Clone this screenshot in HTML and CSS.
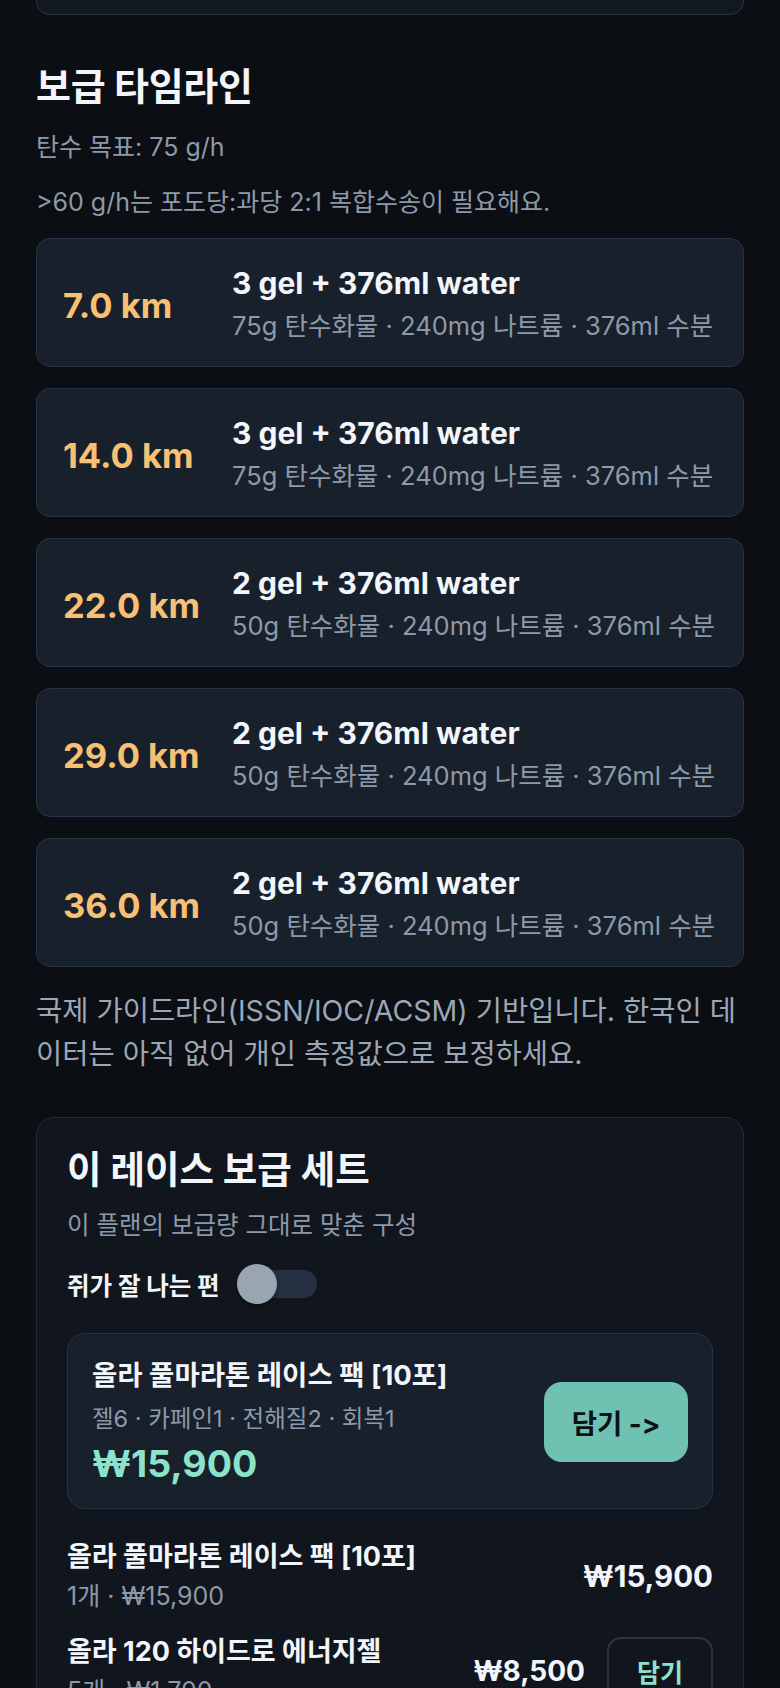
FILE: index.html
```html
<!DOCTYPE html>
<html lang="ko">
<head>
	<meta charset="UTF-8">
	<title>보급 타임라인</title>
	<link rel="stylesheet" href="styles.css">
</head>
<body>
	<div class="page">
		<div class="prev-card"></div>

		<h2 class="sec-title">보급 타임라인</h2>
		<p class="meta first">탄수 목표: 75 g/h</p>
		<p class="meta">&gt;60 g/h는 포도당:과당 2:1 복합수송이 필요해요.</p>

		<ul class="stops">
			<li class="stop">
				<div class="km">7.0 km</div>
				<div>
					<div class="stop-title">3 gel + 376ml water</div>
					<div class="stop-sub">75g 탄수화물 · 240mg 나트륨 · 376ml 수분</div>
				</div>
			</li>
			<li class="stop">
				<div class="km">14.0 km</div>
				<div>
					<div class="stop-title">3 gel + 376ml water</div>
					<div class="stop-sub">75g 탄수화물 · 240mg 나트륨 · 376ml 수분</div>
				</div>
			</li>
			<li class="stop">
				<div class="km">22.0 km</div>
				<div>
					<div class="stop-title">2 gel + 376ml water</div>
					<div class="stop-sub">50g 탄수화물 · 240mg 나트륨 · 376ml 수분</div>
				</div>
			</li>
			<li class="stop">
				<div class="km">29.0 km</div>
				<div>
					<div class="stop-title">2 gel + 376ml water</div>
					<div class="stop-sub">50g 탄수화물 · 240mg 나트륨 · 376ml 수분</div>
				</div>
			</li>
			<li class="stop">
				<div class="km">36.0 km</div>
				<div>
					<div class="stop-title">2 gel + 376ml water</div>
					<div class="stop-sub">50g 탄수화물 · 240mg 나트륨 · 376ml 수분</div>
				</div>
			</li>
		</ul>

		<p class="note">국제 가이드라인(ISSN/IOC/ACSM) 기반입니다. 한국인 데이터는 아직 없어 개인 측정값으로 보정하세요.</p>

		<section class="kit">
			<h2 class="kit-title">이 레이스 보급 세트</h2>
			<p class="kit-sub">이 플랜의 보급량 그대로 맞춘 구성</p>
			<div class="cramp">
				<span>쥐가 잘 나는 편</span>
				<span class="switch"><span class="knob"></span></span>
			</div>

			<div class="pack">
				<div class="pack-info">
					<div class="pack-name">올라 풀마라톤 레이스 팩 [10포]</div>
					<div class="pack-desc">젤6 · 카페인1 · 전해질2 · 회복1</div>
					<div class="pack-price">₩15,900</div>
				</div>
				<button class="btn-add">담기 -&gt;</button>
			</div>

			<ul class="items">
				<li class="item">
					<div class="item-info">
						<div class="item-name">올라 풀마라톤 레이스 팩 [10포]</div>
						<div class="item-sub">1개 · ₩15,900</div>
					</div>
					<div class="item-price">₩15,900</div>
				</li>
				<li class="item">
					<div class="item-info">
						<div class="item-name">올라 120 하이드로 에너지젤</div>
						<div class="item-sub">5개 · ₩1,700</div>
					</div>
					<div class="item-price small">₩8,500</div>
					<button class="btn-line">담기</button>
				</li>
			</ul>
		</section>
	</div>
</body>
</html>
```

FILE: styles.css
```css
* {
	box-sizing: border-box;
}
html, body {
	margin: 0;
	padding: 0;
	background: #0b0e13;
}
body {
	font-family: Inter, "Noto Sans CJK KR", sans-serif;
	color: #f2f5f9;
}
ul {
	list-style: none;
	margin: 0;
	padding: 0;
}
p, h2 {
	margin: 0;
}
button {
	font-family: inherit;
	cursor: pointer;
}
.page {
	padding: 0 36px 40px 36px;
}

/* 위쪽 카드 끝부분 */
.prev-card {
	height: 15px;
	background: #121820;
	border: 1px solid #283242;
	border-top: 0;
	border-radius: 0 0 14px 14px;
}

.sec-title {
	margin-top: 49px;
	font-size: 38px;
	line-height: 44px;
	font-weight: 700;
	letter-spacing: -0.3px;
}
.meta {
	margin-top: 21.5px;
	font-size: 25px;
	line-height: 34px;
	color: #8d99a9;
}
.meta.first {
	margin-top: 21.5px;
}

/* 타임라인 */
.stops {
	margin-top: 19px;
	display: flex;
	flex-direction: column;
	gap: 21px;
}
.stop {
	display: grid;
	grid-template-columns: 141px 1fr;
	column-gap: 28px;
	align-items: center;
	padding: 23px 26px 20px 26px;
	background: #18202b;
	border: 1px solid #283345;
	border-radius: 14px;
}
.km {
	margin-top: 4px;
	font-size: 34.5px;
	line-height: 44px;
	font-weight: 700;
	color: #f7c074;
}
.stop-title {
	font-size: 30px;
	line-height: 43px;
	font-weight: 700;
	color: #f2f5f9;
}
.stop-sub {
	margin-top: 1px;
	font-size: 25.5px;
	line-height: 40px;
	color: #8d99a9;
}

.note {
	margin-top: 22px;
	font-size: 28.5px;
	line-height: 43px;
	color: #9ca7b5;
}

/* 보급 세트 */
.kit {
	margin-top: 42px;
	padding: 30px 30px 40px 30px;
	background: #11161e;
	border: 1px solid #232c3a;
	border-radius: 18px;
}
.kit-title {
	font-size: 37.5px;
	line-height: 44px;
	font-weight: 700;
}
.kit-sub {
	margin-top: 16px;
	font-size: 24.5px;
	line-height: 34px;
	color: #8d99a9;
}
.cramp {
	margin-top: 22px;
	height: 40px;
	display: flex;
	align-items: center;
	gap: 17px;
	font-size: 24.5px;
	font-weight: 700;
}
.switch {
	position: relative;
	width: 80px;
	height: 28px;
	border-radius: 14px;
	background: #253042;
}
.knob {
	position: absolute;
	left: 0;
	top: -6px;
	width: 40px;
	height: 40px;
	border-radius: 50%;
	background: #9aa5b2;
	box-shadow: 0 2px 4px rgba(0, 0, 0, 0.4);
}

.pack {
	margin-top: 29px;
	display: flex;
	align-items: center;
	justify-content: space-between;
	padding: 24px 24px 22px 24px;
	background: #18202b;
	border: 1px solid #283345;
	border-radius: 18px;
}
.pack-name {
	font-size: 27.5px;
	line-height: 34px;
	font-weight: 700;
}
.pack-desc {
	margin-top: 11px;
	font-size: 23.5px;
	line-height: 32px;
	color: #8d99a9;
}
.pack-price {
	margin-top: 7px;
	font-size: 37.5px;
	line-height: 44px;
	font-weight: 700;
	color: #8de2cc;
}
.btn-add {
	width: 144px;
	height: 80px;
	border: 0;
	border-radius: 18px;
	background: #6fc2b2;
	color: #0c1116;
	font-size: 27.5px;
	font-weight: 700;
}

.items {
	margin-top: 30px;
	display: flex;
	flex-direction: column;
	gap: 22px;
}
.item {
	display: flex;
	align-items: center;
	gap: 22px;
}
.item-info {
	flex: 1;
}
.item-name {
	font-size: 27px;
	line-height: 36px;
	font-weight: 700;
}
.item-sub {
	margin-top: 5px;
	font-size: 25px;
	line-height: 32px;
	color: #8d99a9;
}
.item-price {
	font-size: 29.5px;
	font-weight: 700;
}
.item-price.small {
	font-size: 28px;
}
.btn-line {
	width: 106px;
	height: 68px;
	background: transparent;
	border: 2px solid #2a3442;
	border-radius: 14px;
	color: #8de2cc;
	font-size: 25px;
	font-weight: 700;
}
```
